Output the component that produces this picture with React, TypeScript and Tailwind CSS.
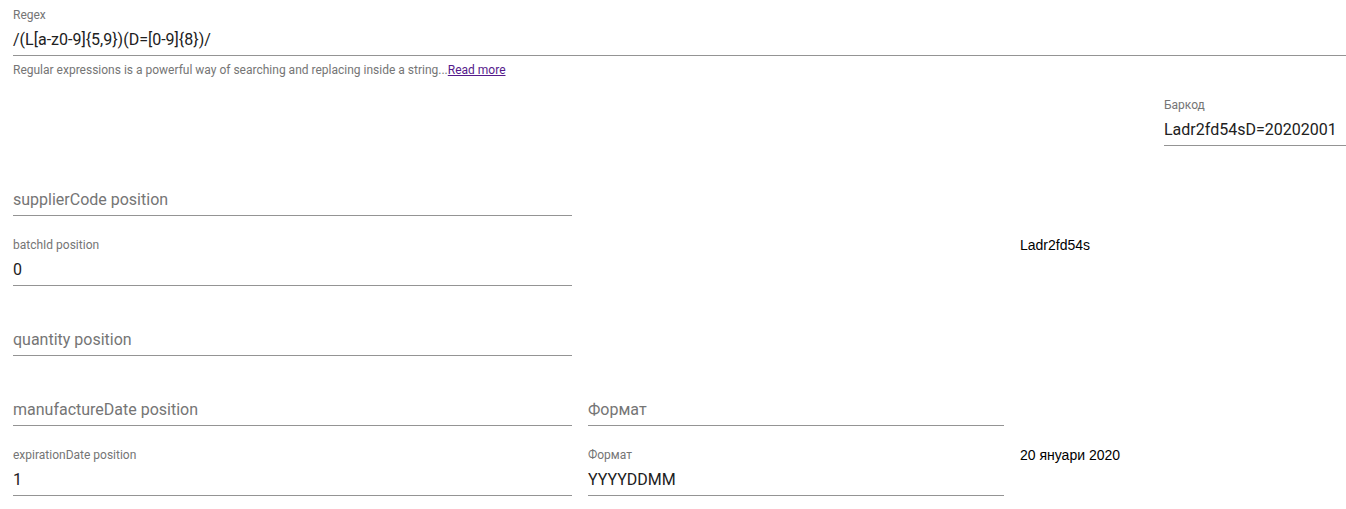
import React from 'react';

type FieldProps = {
    label: string;
    value?: string;
    width: string;
};

// Material-like standard text field: small label above, value on an underline.
// With no value the label sits in the input row, like an unshrunk label.
function Field({ label, value, width }: FieldProps) {
    const hasValue = value !== undefined && value !== '';
    return (
        <div className={`${width} flex flex-col`}>
            <div className="h-[17px] pt-[2.5px] text-[12px] leading-[12px] text-[#757575]">
                {hasValue ? label : ''}
            </div>
            <div className="h-[33px] pt-[5px] pb-[5px] border-b border-[#949494] text-[16px] leading-[23px]">
                {hasValue ? (
                    <span className="text-[#212121]">{value}</span>
                ) : (
                    <span className="text-[#757575]">{label}</span>
                )}
            </div>
        </div>
    );
}

export default function App() {
    return (
        <div className="min-h-screen bg-white pl-[13px] pt-[6px] font-['Roboto','Helvetica','Arial',sans-serif]">
            {/* Regex */}
            <div>
                <Field label="Regex" value="/(L[a-z0-9]{5,9})(D=[0-9]{8})/" width="w-full" />
                <p className="mt-[4px] text-[12px] leading-[20px] text-[#757575]">
                    Regular expressions is a powerful way of searching and replacing inside a string...
                    <a href="#" className="text-[#551a8b] underline">Read more</a>
                </p>
            </div>

            {/* Barcode */}
            <div className="mt-[16px] flex justify-end">
                <Field label="Баркод" value="Ladr2fd54sD=20202001" width="w-[182px]" />
            </div>

            {/* Positions */}
            <div className="mt-[20px] flex flex-col gap-[20px]">
                <div className="flex gap-4">
                    <Field label="supplierCode position" width="w-[559px]" />
                </div>

                <div className="flex gap-4">
                    <Field label="batchId position" value="0" width="w-[559px]" />
                    <div className="w-[416px]" />
                    <div className="pt-[1px] text-[14px] leading-[16px] text-black font-['Liberation_Sans',Arial,sans-serif]">
                        Ladr2fd54s
                    </div>
                </div>

                <div className="flex gap-4">
                    <Field label="quantity position" width="w-[559px]" />
                </div>

                <div className="flex gap-4">
                    <Field label="manufactureDate position" width="w-[559px]" />
                    <Field label="Формат" width="w-[416px]" />
                </div>

                <div className="flex gap-4">
                    <Field label="expirationDate position" value="1" width="w-[559px]" />
                    <Field label="Формат" value="YYYYDDMM" width="w-[416px]" />
                    <div className="pt-[1px] text-[14px] leading-[16px] text-black font-['Liberation_Sans',Arial,sans-serif]">
                        20 януари 2020
                    </div>
                </div>
            </div>
        </div>
    );
}
